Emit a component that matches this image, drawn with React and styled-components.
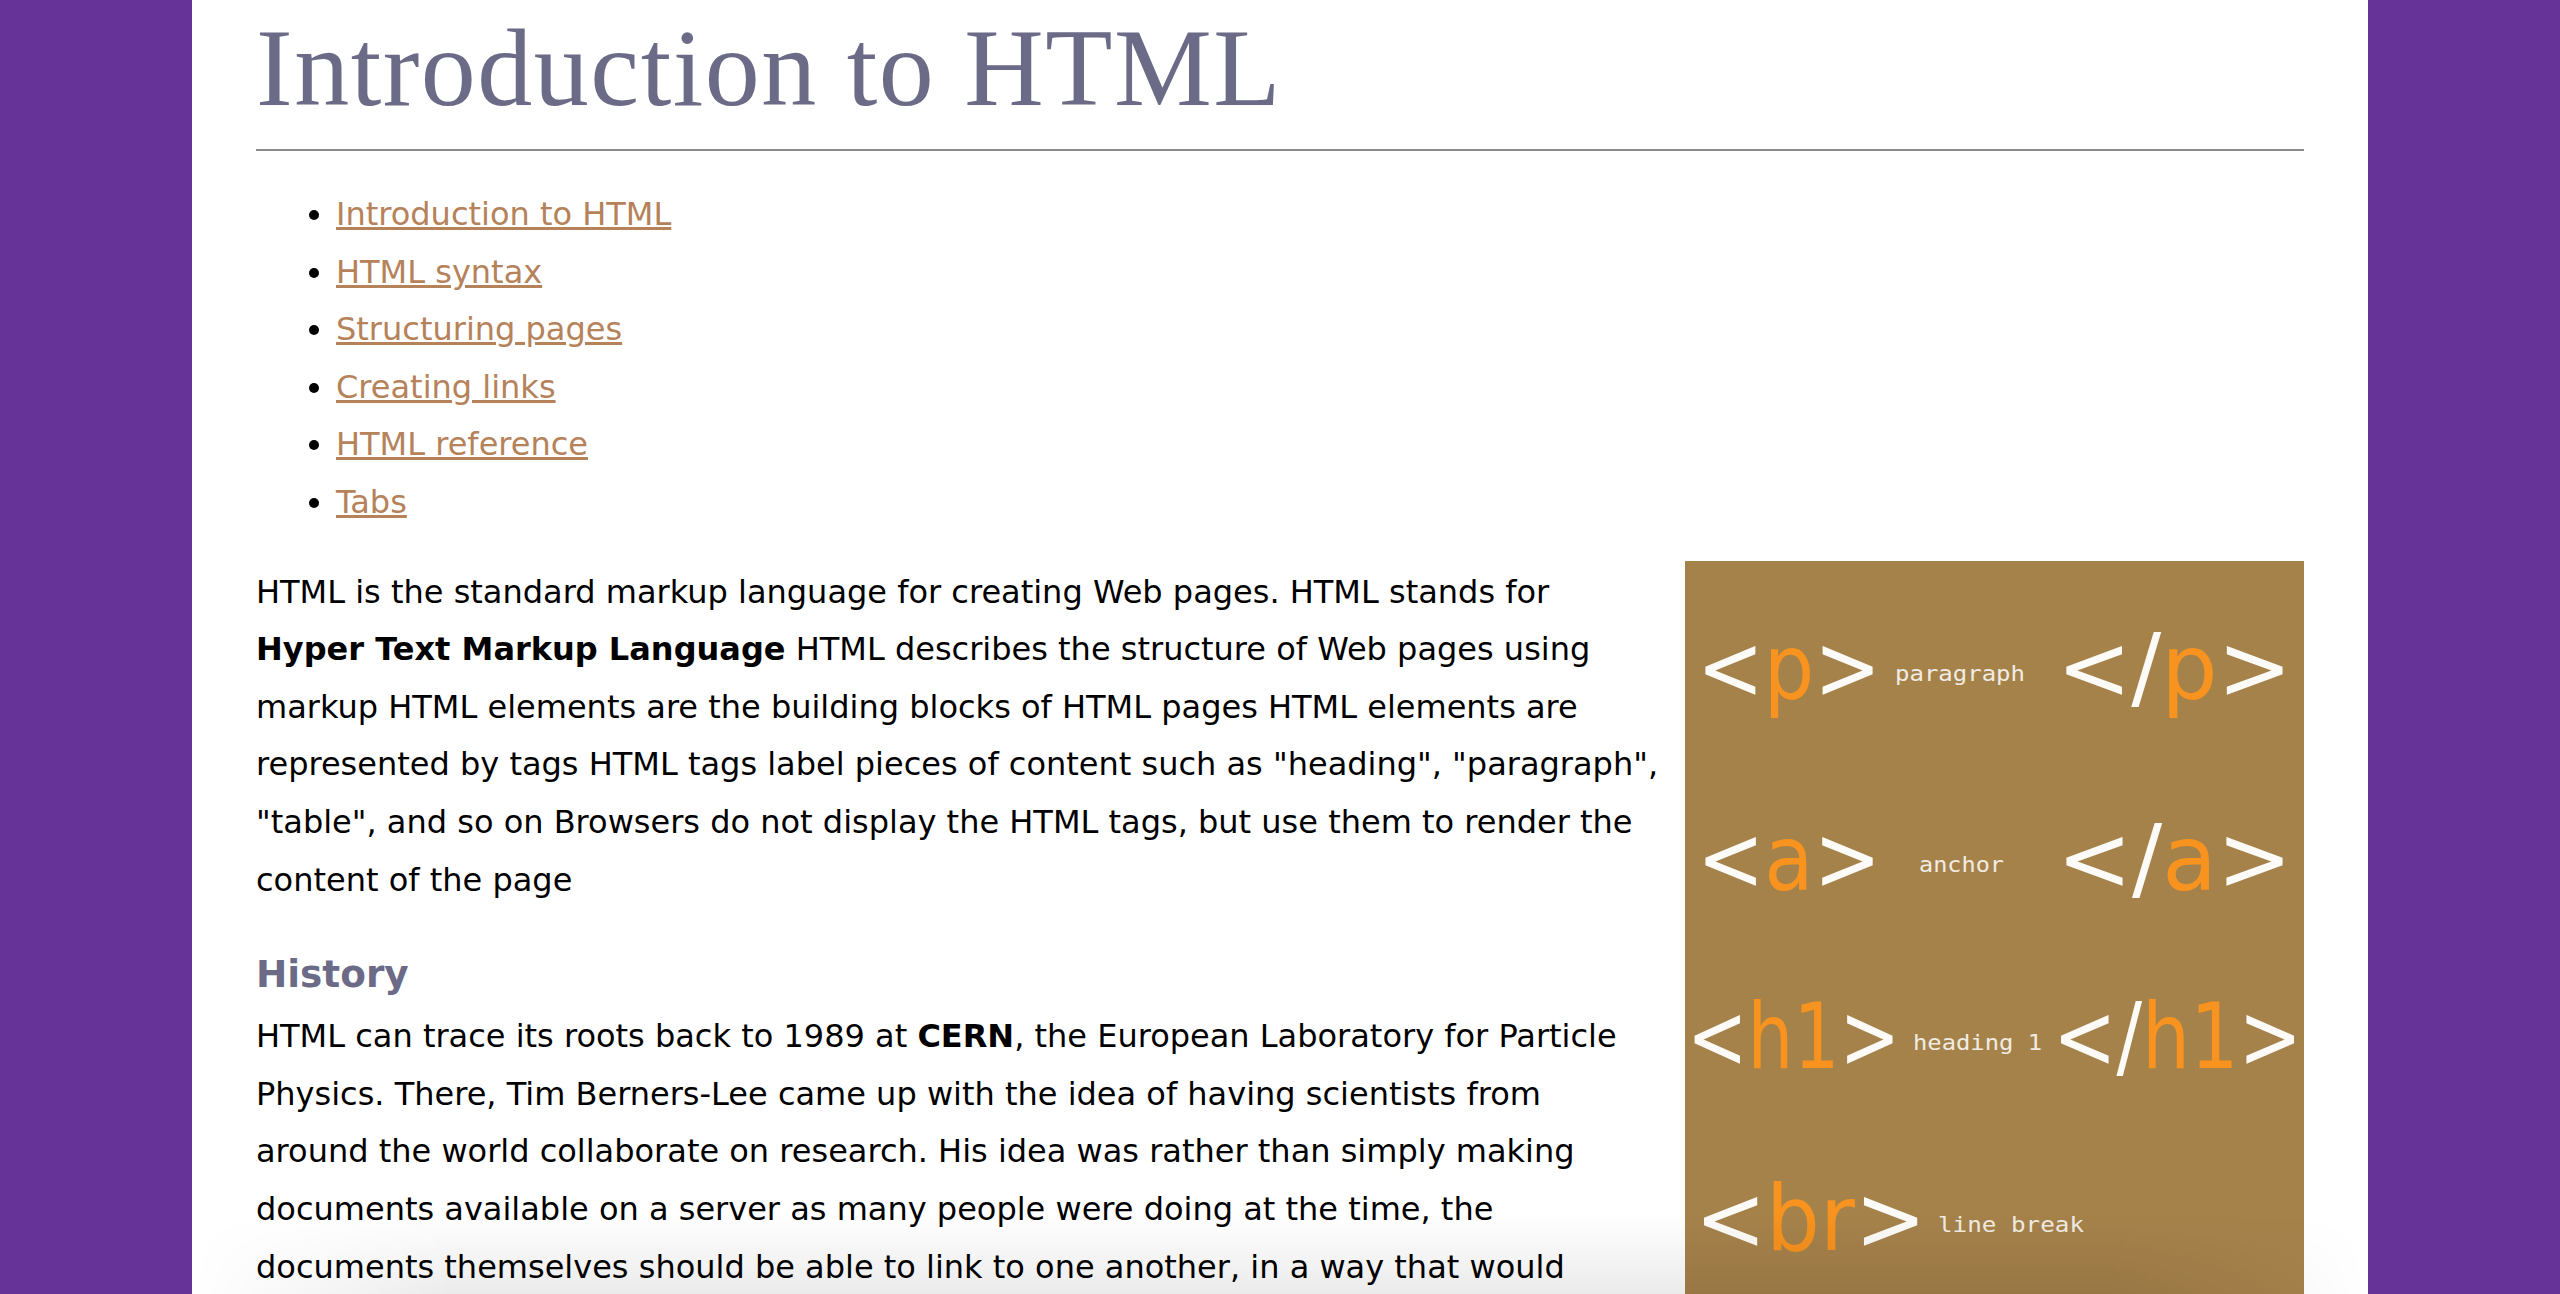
import styled, { createGlobalStyle } from 'styled-components';

const GlobalStyle = createGlobalStyle`
  html, body {
    margin: 0;
    background: #663399;
  }
  body {
    font-family: "DejaVu Sans", Verdana, sans-serif;
    color: #000;
  }
`;

const Page = styled.div`
  box-sizing: border-box;
  width: 2176px;
  min-height: 100vh;
  margin: 0 auto;
  padding: 13px 64px 0;
  background: #fff;
`;

const Title = styled.h1`
  margin: 0;
  padding-bottom: 26px;
  border-bottom: 2px solid #8a8a8a;
  font-family: "Liberation Serif", "Times New Roman", serif;
  font-weight: normal;
  font-size: 110px;
  line-height: 110px;
  letter-spacing: 1.5px;
  color: #6b6b88;
`;

const TocList = styled.ul`
  margin: 35px 0 32px;
  padding-left: 80px;
  font-size: 32px;
  line-height: 57.6px;
`;

const TocLink = styled.a`
  color: #b5825a;
  text-decoration: underline;
`;

const Section = styled.div``;

const Figure = styled.div`
  float: right;
  width: 619px;
  height: 800px;
  margin: -3px 0 20px 26px;
  background: #a6824b;
`;

const TagArt = styled.svg`
  display: block;
`;

const TagText = styled.text`
  font-family: "DejaVu Sans", Verdana, sans-serif;
  font-size: 90px;
  fill: #fdfbf7;
`;

const TagName = styled.tspan`
  fill: #f7931e;
`;

const TagLabel = styled.text`
  font-family: "DejaVu Sans Mono", "Liberation Mono", monospace;
  font-size: 21px;
  fill: #f1ece2;
`;

const Paragraph = styled.p`
  margin: 0 0 32px;
  font-size: 32px;
  line-height: 57.6px;
`;

const Subheading = styled.h3`
  margin: 0;
  font-size: 37.4px;
  line-height: 67px;
  font-weight: bold;
  color: #6b6b88;
`;

const BottomShade = styled.div`
  position: fixed;
  bottom: 0;
  left: 50%;
  width: 2176px;
  height: 80px;
  transform: translateX(-50%);
  pointer-events: none;
  background: linear-gradient(to bottom, rgba(0, 0, 0, 0), rgba(0, 0, 0, 0.08));
  -webkit-mask-image: linear-gradient(to right, transparent 0, #000 12%, #000 88%, transparent 100%);
  mask-image: linear-gradient(to right, transparent 0, #000 12%, #000 88%, transparent 100%);
`;

const toc = [
  'Introduction to HTML',
  'HTML syntax',
  'Structuring pages',
  'Creating links',
  'HTML reference',
  'Tabs',
];

// x, textLength pairs measured off the picture
const tags = [
  { name: 'p', label: 'paragraph', y: 138, open: [12, 184], text: [210, 130], close: [372, 235] },
  { name: 'a', label: 'anchor', y: 329, open: [12, 184], text: [234, 85], close: [372, 235] },
  { name: 'h1', label: 'heading 1', y: 507, open: [2, 213], text: [228, 129], close: [368, 249] },
  { name: 'br', label: 'line break', y: 689, open: [10, 231], text: [253, 146] },
];

const TagChart = () => (
  <TagArt width="619" height="800" viewBox="0 0 619 800">
    {tags.map((t) => (
      <g key={t.name}>
        <TagText x={t.open[0]} y={t.y} textLength={t.open[1]} lengthAdjust="spacingAndGlyphs">
          {'<'}<TagName>{t.name}</TagName>{'>'}
        </TagText>
        <TagLabel x={t.text[0]} y={t.y - 18} textLength={t.text[1]} lengthAdjust="spacingAndGlyphs">
          {t.label}
        </TagLabel>
        {t.close && (
          <TagText x={t.close[0]} y={t.y} textLength={t.close[1]} lengthAdjust="spacingAndGlyphs">
            {'</'}<TagName>{t.name}</TagName>{'>'}
          </TagText>
        )}
      </g>
    ))}
  </TagArt>
);

const App = () => (
  <>
    <GlobalStyle />
    <Page>
      <Title>Introduction to HTML</Title>
      <TocList>
        {toc.map((item) => (
          <li key={item}><TocLink href="#">{item}</TocLink></li>
        ))}
      </TocList>
      <Section>
        <Figure>
          <TagChart />
        </Figure>
        <Paragraph>
          HTML is the standard markup language for creating Web pages. HTML stands for <b>Hyper Text Markup Language</b> HTML
          describes the structure of Web pages using markup HTML elements are the building blocks of HTML pages HTML
          elements are represented by tags HTML tags label pieces of content such as "heading", "paragraph", "table", and so
          on Browsers do not display the HTML tags, but use them to render the content of the page
        </Paragraph>
        <Subheading>History</Subheading>
        <Paragraph>
          HTML can trace its roots back to 1989 at <b>CERN</b>, the European Laboratory for Particle Physics. There, Tim
          Berners-Lee came up with the idea of having scientists from around the world collaborate on research. His idea
          was rather than simply making documents available on a server as many people were doing at the time, the
          documents themselves should be able to link to one another, in a way that would connect information across the
          whole web.
        </Paragraph>
      </Section>
    </Page>
    <BottomShade />
  </>
);

export default App;
